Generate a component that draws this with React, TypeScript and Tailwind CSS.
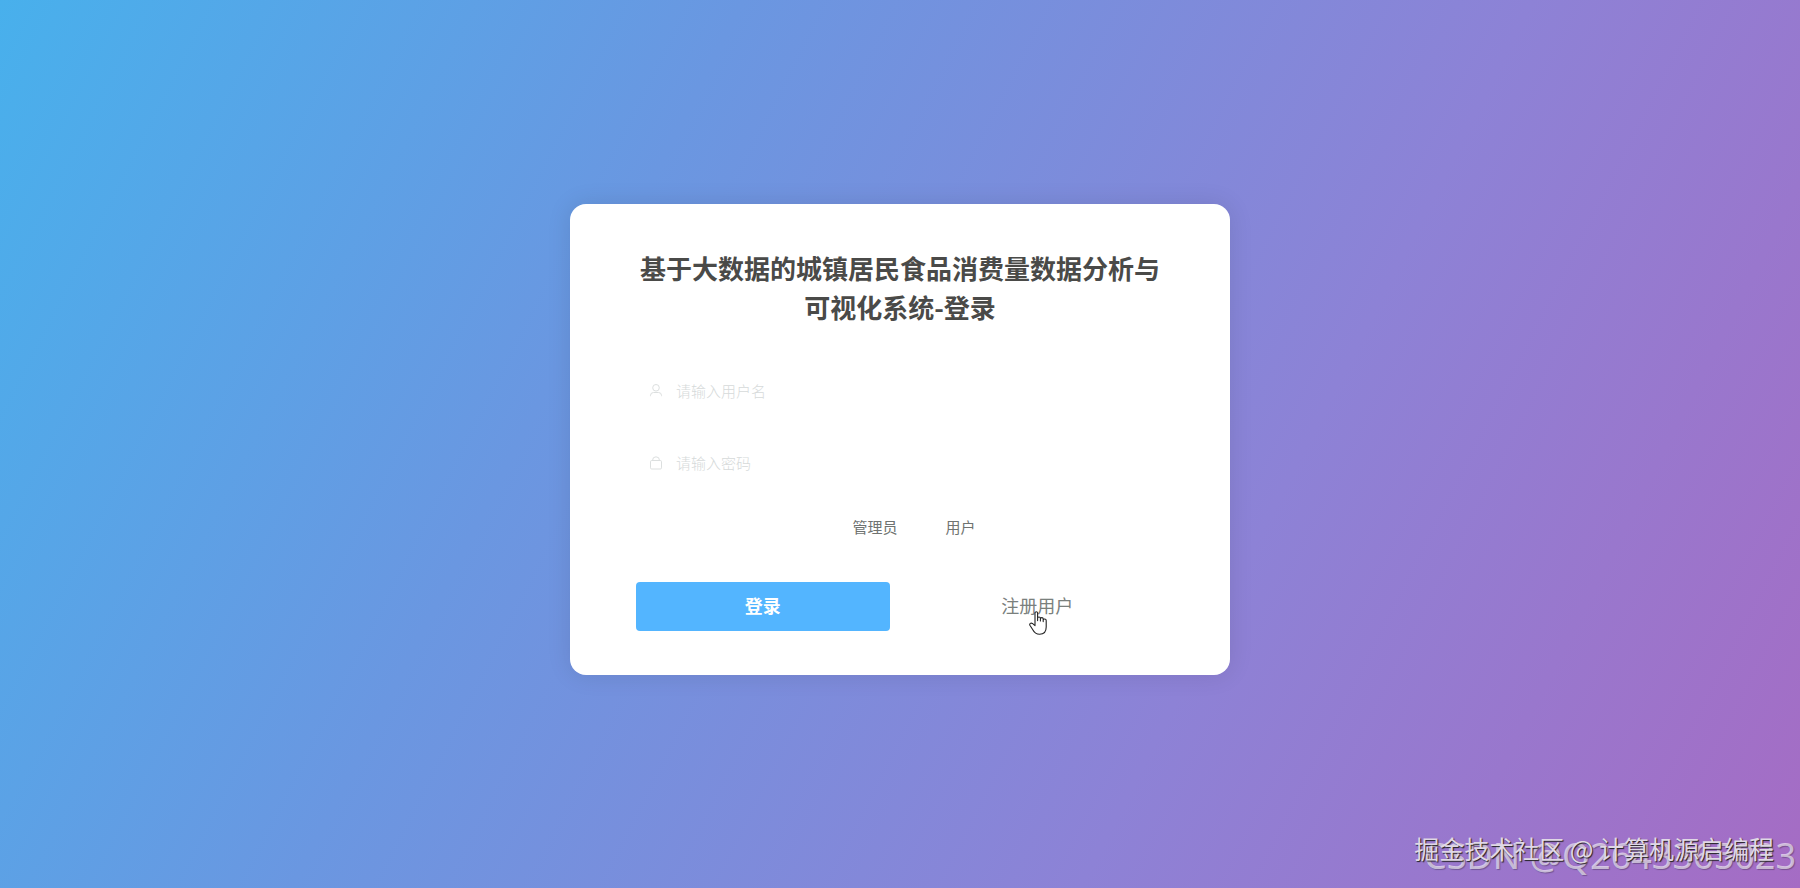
import React from "react";

function UserIcon() {
  return (
    <svg viewBox="0 0 16 16" className="size-4 shrink-0" fill="none" stroke="currentColor" strokeWidth="1" aria-hidden="true">
      <circle cx="8" cy="4.8" r="3.3" />
      <path d="M2.5 13.2V12.4A3 3 0 0 1 5.5 9.5H10.5A3 3 0 0 1 13.5 12.4V13.2" />
    </svg>
  );
}

function LockIcon() {
  return (
    <svg viewBox="0 0 16 16" className="size-4 shrink-0" fill="none" stroke="currentColor" strokeWidth="1" aria-hidden="true">
      <rect x="2.5" y="5.5" width="11" height="8.5" rx="1.2" />
      <path d="M4.5 5.5A3.5 3.7 0 0 1 11.5 5.5" />
    </svg>
  );
}

function HandCursor() {
  return (
    <svg viewBox="0 0 18 24" className="pointer-events-none absolute top-1/2 left-1/2 mt-1 -ml-2 h-6 w-[18px]" aria-hidden="true">
      <path
        d="M6 14.6V2C6 .4 8.6 .4 8.6 2V9.6V7.2C8.6 5.6 11.4 5.6 11.4 7.2V10V7.8C11.4 6.2 14.2 6.2 14.2 7.8V10.6V9C14.2 7.6 17.2 7.6 17.2 9.4V16C17.2 20.5 14.6 23.3 10.6 23.3C7 23.3 5.2 21.6 3.8 18.8L.9 14.2C.2 12.6 1.8 11.6 3.4 12.4Z"
        fill="#fff"
        stroke="#222"
        strokeWidth="1.1"
        strokeLinejoin="round"
      />
    </svg>
  );
}

type FieldProps = { id: string; type: string; label: string; icon: React.ReactNode };

function Field({ id, type, label, icon }: FieldProps) {
  return (
    <div className="flex h-12 items-center gap-3 px-3 text-[#dcdfdf]">
      {icon}
      <input
        id={id}
        type={type}
        aria-label={label}
        placeholder={label}
        className="min-w-0 flex-1 bg-transparent text-[15px] font-light text-[#606266] outline-none placeholder:text-[#d6dada]"
      />
    </div>
  );
}

function Role({ label }: { label: string }) {
  return (
    <label className="flex items-center text-[15px] leading-6 text-[#6f7371]">
      <input type="radio" name="role" className="mr-2 size-4 appearance-none" />
      {label}
    </label>
  );
}

export default function App() {
  return (
    <main className="relative flex min-h-screen flex-col items-center overflow-hidden bg-[linear-gradient(117deg,#48b0ec_0%,#6a97e1_33%,#8d82d6_68%,#a56cc4_100%)] px-4 pt-[204px] font-['Noto_Sans_CJK_SC',sans-serif]">
      <form className="w-full max-w-[660px] rounded-2xl bg-white px-[66px] py-11 shadow-[0_0_24px_rgba(0,0,0,0.1)]" onSubmit={(e) => e.preventDefault()}>
        <h1 className="text-center text-[26px] leading-[39px] font-bold text-[#4a4a48]">
          基于大数据的城镇居民食品消费量数据分析与
          <br />
          可视化系统-登录
        </h1>
        <div className="mt-[41px] flex flex-col gap-6">
          <Field id="username" type="text" label="请输入用户名" icon={<UserIcon />} />
          <Field id="password" type="password" label="请输入密码" icon={<LockIcon />} />
        </div>
        <div className="mt-7 flex justify-center gap-6 pl-1">
          <Role label="管理员" />
          <Role label="用户" />
        </div>
        <div className="mt-[43px] grid grid-cols-2 gap-[21px]">
          <button type="submit" className="h-[49px] rounded bg-[#53b5ff] pb-[3px] text-lg font-bold text-white">
            登录
          </button>
          <button type="button" className="relative h-[49px] rounded pb-[3px] text-lg text-[#7a807d]">
            注册用户
            <HandCursor />
          </button>
        </div>
      </form>
      <p className="absolute right-1 bottom-3 font-['Noto_Sans',sans-serif] text-[36px] leading-10 whitespace-nowrap text-white/60 [text-shadow:1px_1px_1px_#0004]">CSDN @Q2643365023</p>
      <p className="absolute right-[26px] bottom-[22px] text-[25px] leading-9 whitespace-nowrap text-[#e0d8e6] [text-shadow:1px_1px_1px_#222]">掘金技术社区 @ 计算机源启编程</p>
    </main>
  );
}
